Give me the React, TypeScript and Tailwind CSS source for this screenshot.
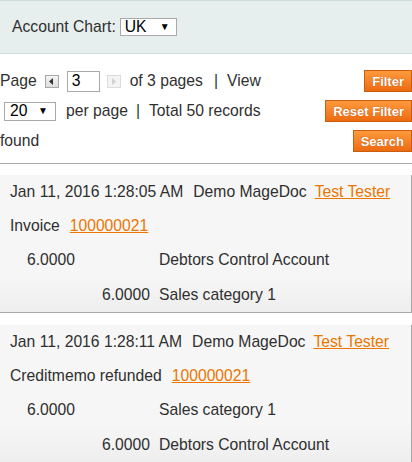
const Caret = () => <span className="text-[10px] leading-none text-black">▼</span>

const OrangeButton = ({ label }: { label: string }) => (
  <button className="h-[22px] border border-[#c65d10] bg-gradient-to-b from-[#fd9a3c] to-[#ee6a0e] px-[7px] text-[13px] font-bold leading-none text-white [text-shadow:0_0_1px_#b0450a]">
    {label}
  </button>
)

const ArrowButton = ({ dir, disabled }: { dir: 'left' | 'right'; disabled?: boolean }) => (
  <span
    className={
      disabled
        ? 'flex h-[13px] w-[14px] items-center justify-center border border-[#dcdcdc] bg-[#f4f4f4]'
        : 'flex h-[13px] w-[14px] items-center justify-center border border-[#a9a9a9] bg-gradient-to-b from-[#f4f4f4] to-[#dedede]'
    }
  >
    <svg width="5" height="7" viewBox="0 0 5 7">
      {dir === 'left' ? (
        <path d="M4 0v7L0 3.5z" fill="#333" />
      ) : (
        <path d="M1 0v7l4-3.5z" fill="#d2d2d2" />
      )}
    </svg>
  </span>
)

type Line = { amount: string; account: string }

const Entry = ({
  time,
  doc,
  first,
  second,
}: {
  time: string
  doc: string
  first: Line
  second: Line
}) => (
  <div className="border-r border-b border-[#a6a6a6] bg-[#f6f6f6]">
    <div className="flex h-[34px] items-center px-[10px]">
      <span>{time}</span>
      <span className="ml-[10px]">Demo MageDoc</span>
      <a className="ml-[8px] text-[#ea7601] underline">Test Tester</a>
    </div>
    <div className="flex h-[34px] items-center px-[10px]">
      <span>{doc}</span>
      <a className="ml-[10px] text-[#ea7601] underline">100000021</a>
    </div>
    <div className="grid h-[34px] grid-cols-[159px_1fr] items-center">
      <span className="pl-[27px]">{first.amount}</span>
      <span>{first.account}</span>
    </div>
    <div className="grid h-[35px] grid-cols-[159px_1fr] items-center bg-gradient-to-b from-[#f6f6f6] to-[#eeeeee]">
      <span className="pr-[9px] text-right">{second.amount}</span>
      <span>{second.account}</span>
    </div>
  </div>
)

export default function App() {
  return (
    <div className="h-[462px] w-[412px] overflow-hidden bg-white font-['Liberation_Sans',Arial,sans-serif] text-[15.7px] leading-none text-[#2f2f2f]">
      <div className="flex h-[54px] items-center border-y border-[#cfdcdc] bg-[#e6eeee] pl-[12px]">
        <span>Account Chart:</span>
        <div className="ml-[4px] flex h-[18px] w-[57px] items-center justify-between border border-[#a9a9a9] bg-white pr-[6px] pl-[4px] text-black">
          <span>UK</span>
          <Caret />
        </div>
      </div>

      <div className="mt-[16px] flex flex-col gap-[8px]">
        <div className="flex h-[22px] items-center justify-between">
          <div className="flex items-center">
            <span>Page</span>
            <span className="ml-[8px]">
              <ArrowButton dir="left" />
            </span>
            <div className="ml-[8px] flex h-[21px] w-[33px] items-center border border-[#a9a9a9] bg-white pl-[4px] text-black">3</div>
            <span className="ml-[7px]">
              <ArrowButton dir="right" disabled />
            </span>
            <span className="ml-[9px]">of 3 pages</span>
            <span className="ml-[11px]">|</span>
            <span className="ml-[9px]">View</span>
          </div>
          <OrangeButton label="Filter" />
        </div>

        <div className="flex h-[22px] items-center justify-between">
          <div className="flex items-center">
            <div className="ml-[4px] flex h-[19px] w-[52px] items-center justify-between border border-[#a9a9a9] bg-white pr-[7px] pl-[5px] text-black">
              <span>20</span>
              <Caret />
            </div>
            <span className="ml-[10px]">per page</span>
            <span className="ml-[8px]">|</span>
            <span className="ml-[9px]">Total 50 records</span>
          </div>
          <OrangeButton label="Reset Filter" />
        </div>

        <div className="flex h-[22px] items-center justify-between">
          <span>found</span>
          <OrangeButton label="Search" />
        </div>
      </div>

      <div className="mt-[11px] border-t border-[#a9a9a9]" />

      <div className="mt-[11px] flex flex-col gap-[12px]">
        <Entry
          time="Jan 11, 2016 1:28:05 AM"
          doc="Invoice"
          first={{ amount: '6.0000', account: 'Debtors Control Account' }}
          second={{ amount: '6.0000', account: 'Sales category 1' }}
        />
        <Entry
          time="Jan 11, 2016 1:28:11 AM"
          doc="Creditmemo refunded"
          first={{ amount: '6.0000', account: 'Sales category 1' }}
          second={{ amount: '6.0000', account: 'Debtors Control Account' }}
        />
      </div>
    </div>
  )
}
